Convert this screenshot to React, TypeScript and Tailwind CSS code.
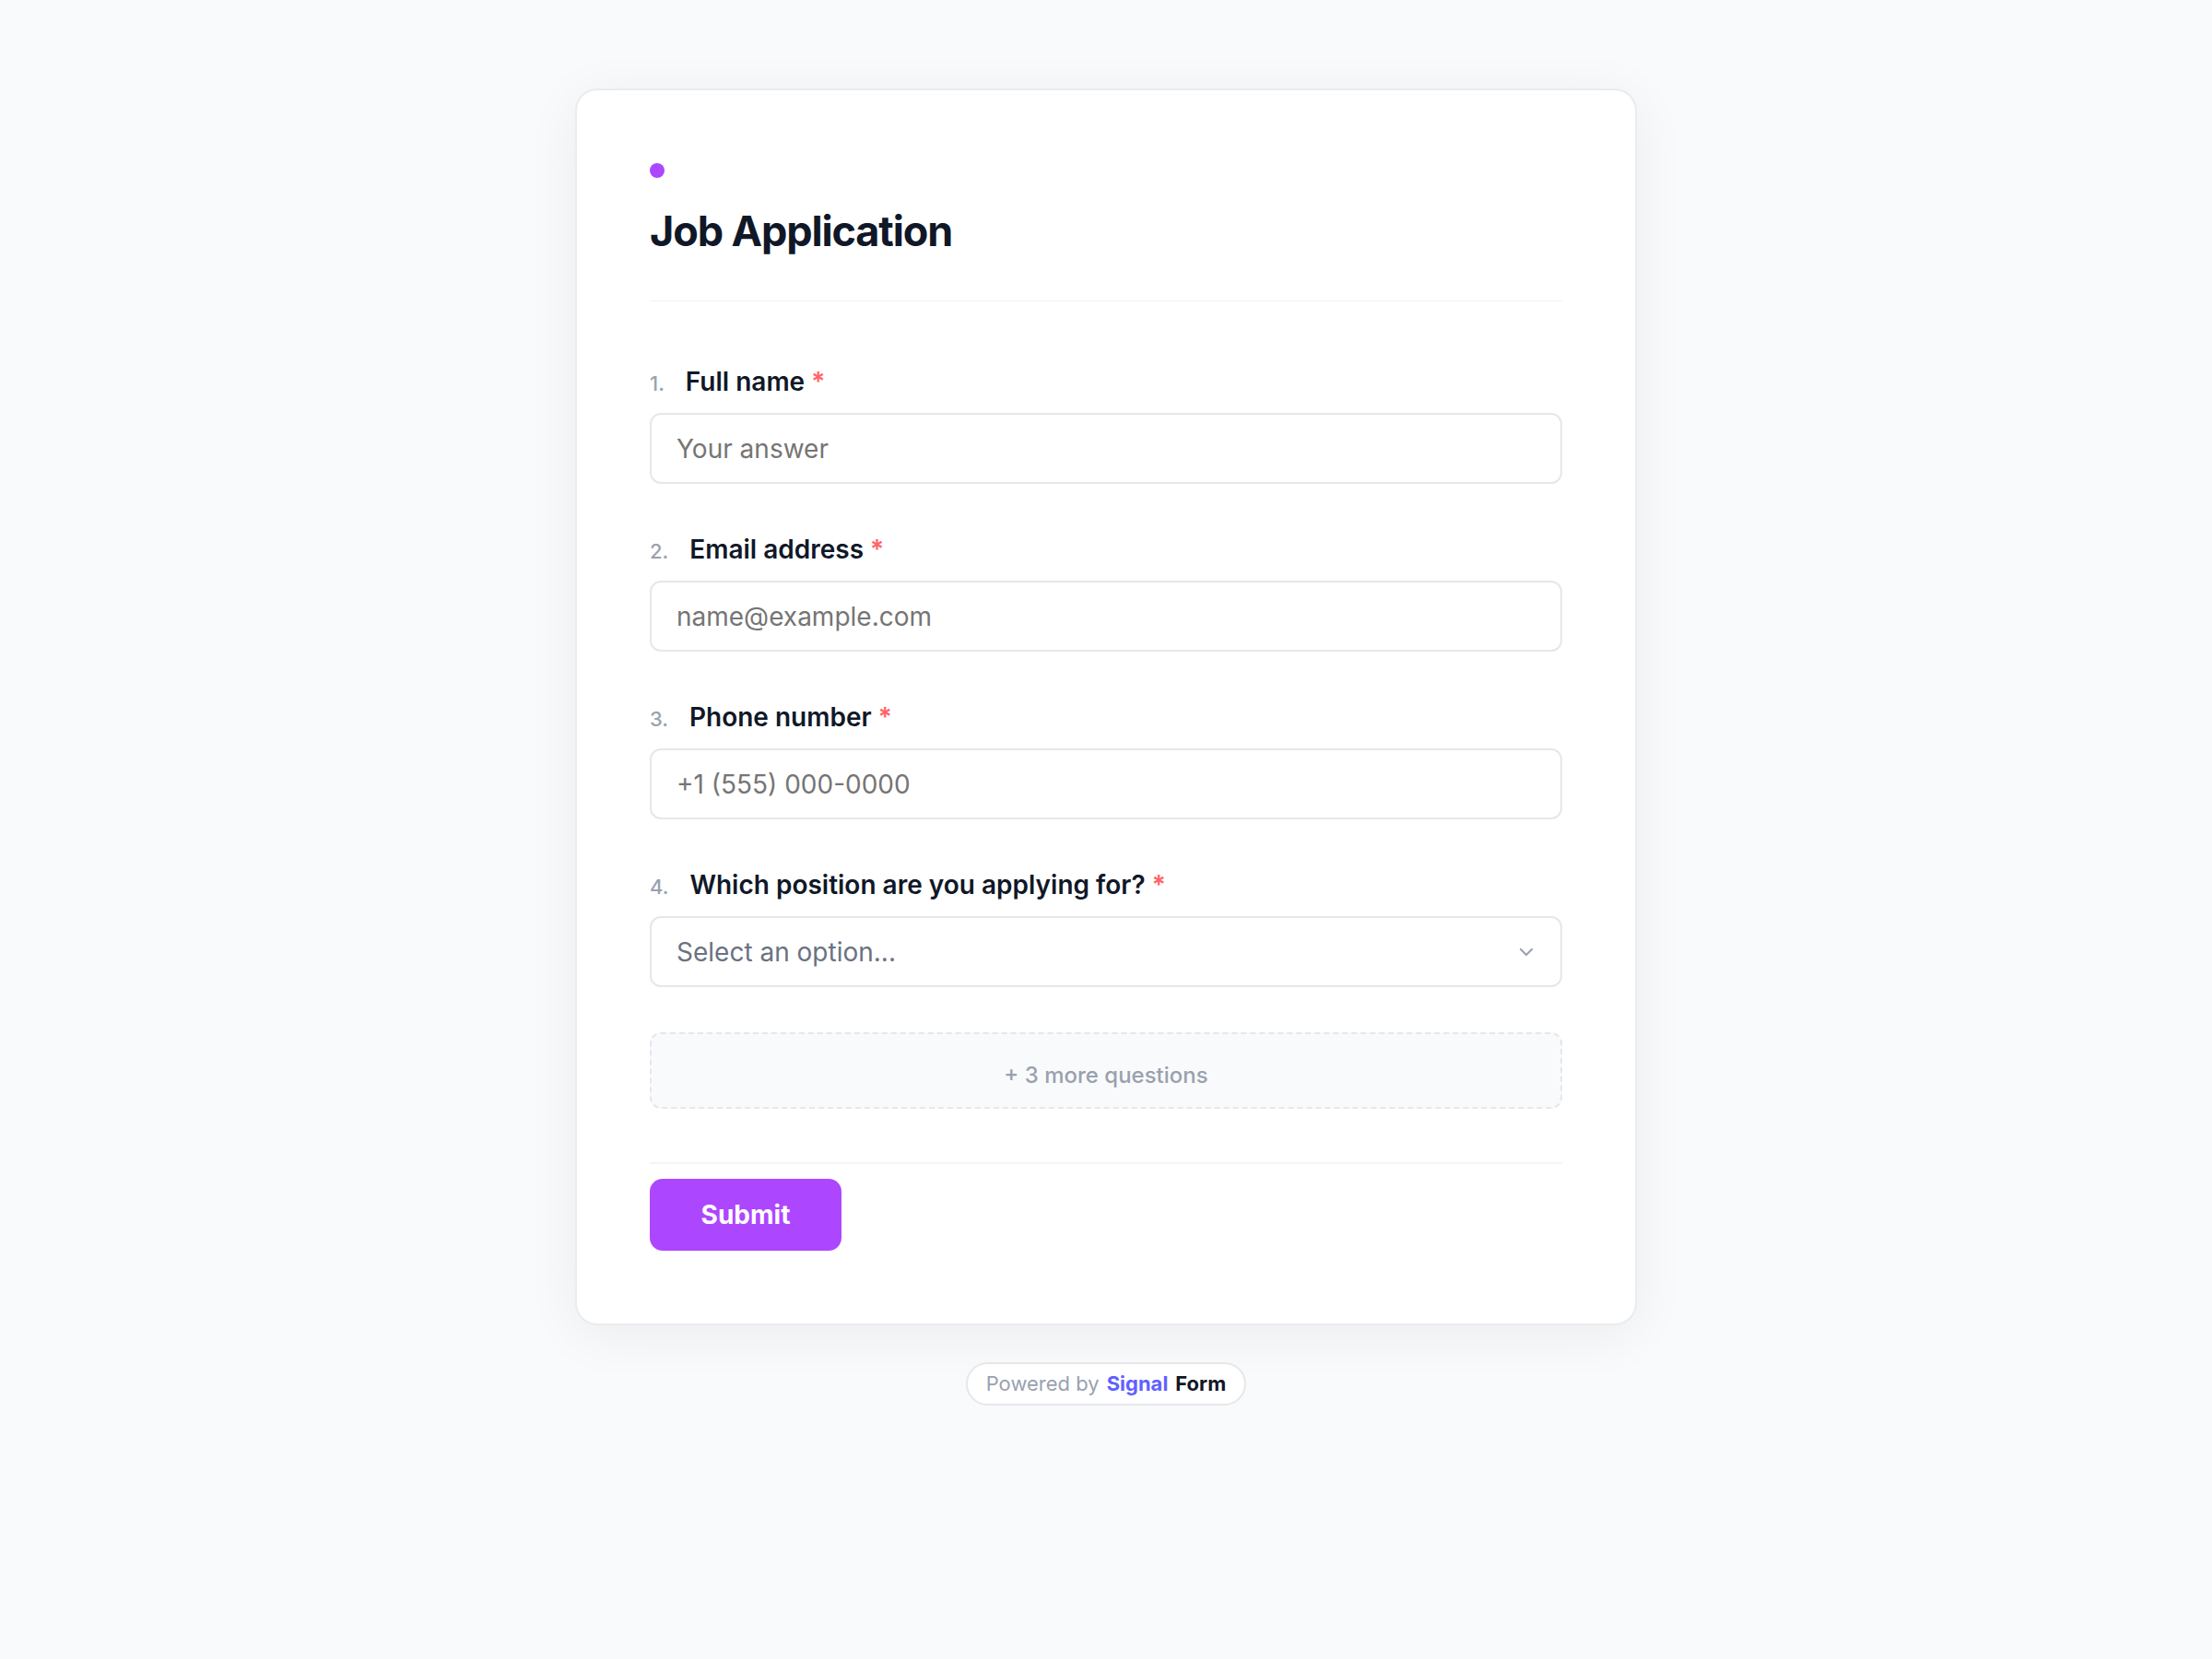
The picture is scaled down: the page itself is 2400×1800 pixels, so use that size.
import React from 'react'

const questions = [
  { n: 1, label: 'Full name', placeholder: 'Your answer' },
  { n: 2, label: 'Email address', placeholder: 'name@example.com' },
  { n: 3, label: 'Phone number', placeholder: '+1 (555) 000-0000' },
]

const Label = ({ n, label }: { n: number; label: string }) => (
  <div className="flex items-baseline h-[36px] leading-[36px] mt-[2px]">
    <span className="shrink-0 text-[22px] font-medium text-gray-400">{n}.</span>
    <span className="ml-[23px] text-[28px] font-semibold text-gray-900">{label}</span>
    <span className="ml-[7px] text-[28px] font-semibold text-red-400">*</span>
  </div>
)

const App = () => {
  return (
    <div className="min-h-screen bg-gray-50 flex flex-col items-center pt-[96px] font-['Inter',sans-serif]">
      <div className="w-[1152px] bg-white border-2 border-gray-200/80 rounded-3xl shadow-[0_10px_60px_rgba(17,24,39,0.06)] p-[79px]">
        <div className="w-[16px] h-[16px] rounded-full bg-purple-500" />
        <h1 className="mt-[31px] text-[45px] leading-[54px] font-bold tracking-tight text-gray-900">Job Application</h1>
        <div className="mt-[48px] h-px bg-gray-100" />

        <div className="mt-[67px] flex flex-col gap-[51px]">
          {questions.map(q => (
            <div key={q.n}>
              <Label n={q.n} label={q.label} />
              <input
                placeholder={q.placeholder}
                className="mt-[16px] w-full h-[77px] px-[27px] rounded-xl border-2 border-gray-200 bg-white text-[28px] text-gray-900 placeholder:text-[#757575] outline-none"
              />
            </div>
          ))}
          <div>
            <Label n={4} label="Which position are you applying for?" />
            <div className="mt-[16px] w-full h-[77px] px-[27px] rounded-xl border-2 border-gray-200 bg-white flex items-center justify-between">
              <span className="text-[28px] text-gray-500">Select an option...</span>
              <svg width="24" height="24" viewBox="0 0 24 24" fill="none" stroke="#9ca3af" strokeWidth="2.2" strokeLinecap="round" strokeLinejoin="round" className="mr-[-2px]">
                <path d="M6 9l6 6 6-6" />
              </svg>
            </div>
          </div>
        </div>

        <div className="mt-[49px] h-[83px] rounded-xl border-2 border-dashed border-gray-200 bg-gray-50 flex items-center justify-center pt-[10px] text-[24px] font-medium text-gray-400">
          + 3 more questions
        </div>

        <div className="mt-[58px] border-t-2 border-gray-100 pt-[16px]">
          <button className="w-[208px] h-[78px] rounded-[14px] bg-purple-500 text-white text-[28px] font-bold">Submit</button>
        </div>
      </div>

      <div className="mt-[40px] h-[47px] px-[20px] rounded-full border-2 border-gray-200 bg-white flex items-center gap-[8px] text-[22px]">
        <span className="text-gray-400">Powered by</span>
        <span className="font-bold text-indigo-500">Signal</span>
        <span className="font-bold text-gray-900">Form</span>
      </div>
    </div>
  )
}

export default App
